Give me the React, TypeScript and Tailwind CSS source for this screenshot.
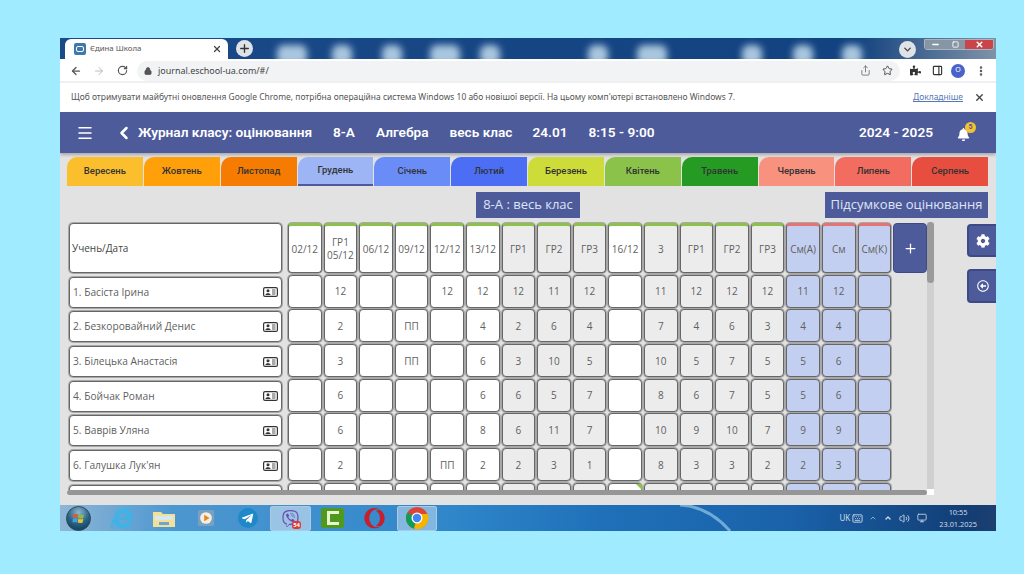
import { ArrowLeft, ArrowRight, RotateCw, Lock, Star, Share, MoreVertical, X, Plus, Menu, ChevronLeft, ChevronDown, Minus, Square, PanelRight, Volume2, ChevronUp, Keyboard, Monitor } from "lucide-react";
import { FaBell, FaCog, FaPuzzlePiece, FaRegArrowAltCircleLeft, FaInternetExplorer, FaTelegramPlane, FaViber, FaOpera } from "react-icons/fa";

const months = [
  { name: "Вересень", bg: "bg-[#fbbf2d]" },
  { name: "Жовтень", bg: "bg-[#ff9f0a]" },
  { name: "Листопад", bg: "bg-[#f57c00]" },
  { name: "Грудень", bg: "bg-[#9db4f5]", active: true },
  { name: "Січень", bg: "bg-[#6a8cf7]" },
  { name: "Лютий", bg: "bg-[#4c6ef5]" },
  { name: "Березень", bg: "bg-[#cddc39]" },
  { name: "Квітень", bg: "bg-[#8bc34a]" },
  { name: "Травень", bg: "bg-[#259b24]" },
  { name: "Червень", bg: "bg-[#f9917f]" },
  { name: "Липень", bg: "bg-[#f36c60]" },
  { name: "Серпень", bg: "bg-[#e84e40]" },
];

const columns = ["02/12", "ГР1 05/12", "06/12", "09/12", "12/12", "13/12", "ГР1", "ГР2", "ГР3", "16/12", "3", "ГР1", "ГР2", "ГР3", "См(А)", "См", "См(К)"];
const whiteCols = [0, 1, 2, 3, 4, 5, 9];

const students = [
  { name: "1. Басіста Ірина", marks: ["", "12", "", "", "12", "12", "12", "11", "12", "", "11", "12", "12", "12", "11", "12", ""] },
  { name: "2. Безкоровайний Денис", marks: ["", "2", "", "ПП", "", "4", "2", "6", "4", "", "7", "4", "6", "3", "4", "4", ""] },
  { name: "3. Білецька Анастасія", marks: ["", "3", "", "ПП", "", "6", "3", "10", "5", "", "10", "5", "7", "5", "5", "6", ""] },
  { name: "4. Бойчак Роман", marks: ["", "6", "", "", "", "6", "6", "5", "7", "", "8", "6", "7", "5", "5", "6", ""] },
  { name: "5. Ваврів Уляна", marks: ["", "6", "", "", "", "8", "6", "11", "7", "", "10", "9", "10", "7", "9", "9", ""] },
  { name: "6. Галушка Лук'ян", marks: ["", "2", "", "", "ПП", "2", "2", "3", "1", "", "8", "3", "3", "2", "2", "3", ""] },
  { name: "", marks: Array(17).fill("") },
];

function cellBg(i: number) {
  if (i >= 14) return "bg-[#c3cff0]";
  return whiteCols.includes(i) ? "bg-white" : "bg-[#ececec]";
}

const blobs = [
  { x: 232, w: 30 }, { x: 282, w: 20 }, { x: 332, w: 20 }, { x: 385, w: 30 }, { x: 430, w: 20 },
  { x: 538, w: 20 }, { x: 592, w: 30 }, { x: 692, w: 20 }, { x: 743, w: 20 }, { x: 792, w: 20 },
];

function Wallpaper() {
  return (
    <svg width="936" height="22" className="absolute left-0 top-0">
      <defs>
        <filter id="soft" x="-50%" y="-50%" width="200%" height="200%"><feGaussianBlur stdDeviation="3.5" /></filter>
        <linearGradient id="sky" x1="0" x2="1" y1="0" y2="0">
          <stop offset="0" stopColor="#1a4a88" />
          <stop offset="0.85" stopColor="#12427f" />
          <stop offset="1" stopColor="#7f93a8" />
        </linearGradient>
      </defs>
      <rect width="936" height="22" fill="url(#sky)" />
      {blobs.map((b) => (
        <rect key={b.x} x={b.x - b.w / 2} y="7" width={b.w} height="20" rx="7" fill="#a9c6df" filter="url(#soft)" />
      ))}
    </svg>
  );
}

function Browser() {
  return (
    <>
      <div className="relative h-[21px] shrink-0 overflow-hidden">
        <Wallpaper />
        <div className="relative flex h-full items-end pl-[5px]">
          <div className="flex h-[20px] w-[163px] items-center rounded-t-[6px] bg-white pl-[9px] pr-[6px]">
            <div className="flex h-[12px] w-[12px] items-center justify-center rounded-[2px] bg-[#3f78ab]">
              <div className="h-[6px] w-[8px] rounded-[2px] border border-white" />
            </div>
            <span className="ml-[4px] text-[7.8px] text-[#555]">Єдина Школа</span>
            <X size={10} strokeWidth={3} className="ml-auto text-[#444]" />
          </div>
          <div className="mb-[2px] ml-[8px] flex h-[17px] w-[17px] items-center justify-center rounded-full bg-[#dfe3e8]">
            <Plus size={13} strokeWidth={2.5} className="text-[#333]" />
          </div>
          <div className="mb-[1px] ml-auto mr-[80px] flex h-[17px] w-[17px] items-center justify-center rounded-full bg-[#dfe3e8]">
            <ChevronDown size={11} strokeWidth={3} className="text-[#444]" />
          </div>
        </div>
        <div className="absolute right-[2px] top-[1px] flex h-[11px] w-[70px] overflow-hidden rounded-b-[3px] border border-[#a9b4bf]">
          <div className="flex w-[20px] items-center justify-center bg-[#8796a5]"><Minus size={9} strokeWidth={4} className="text-white" /></div>
          <div className="flex w-[20px] items-center justify-center bg-[#8796a5]"><Square size={7} strokeWidth={3} className="text-white" /></div>
          <div className="flex flex-1 items-center justify-center bg-[#c8454a]"><X size={9} strokeWidth={4} className="text-white" /></div>
        </div>
      </div>
      <div className="flex h-[22px] shrink-0 items-center bg-white pl-[10px] pr-[6px] pt-[1px] text-[#555]">
        <ArrowLeft size={12} strokeWidth={2.5} />
        <ArrowRight size={12} strokeWidth={2} className="ml-[11px] text-[#bbb]" />
        <RotateCw size={11} strokeWidth={2.5} className="ml-[12px]" />
        <div className="ml-[9px] flex h-[20px] w-[763px] items-center rounded-full bg-[#f1f3f4] pl-[7px] pr-[4px]">
          <Lock size={8} strokeWidth={3} fill="#555" />
          <span className="ml-[6px] text-[8.95px] text-[#444]">journal.eschool-ua.com/#/</span>
          <Share size={11} className="ml-auto text-[#777]" />
          <Star size={11} strokeWidth={2} className="ml-[11px] mr-[3px] text-[#444]" />
        </div>
        <FaPuzzlePiece size={11} className="ml-[10px] text-[#333]" />
        <PanelRight size={11} strokeWidth={2.5} className="ml-[11px] text-[#333]" />
        <div className="ml-[8px] flex h-[14px] w-[14px] items-center justify-center rounded-full bg-[#4a63c8] text-[7px] text-white">O</div>
        <MoreVertical size={12} strokeWidth={3} className="ml-[10px] text-[#555]" />
      </div>
      <div className="flex h-[2px] shrink-0 bg-[#eef0f2]" />
      <div className="flex h-[29px] shrink-0 items-center bg-white pl-[11px] pr-[11px] text-[8.45px] text-[#555]">
        <span>Щоб отримувати майбутні оновлення Google Chrome, потрібна операційна система Windows 10 або новішої версії. На цьому комп'ютері встановлено Windows 7.</span>
        <span className="ml-auto text-[#5577b5] underline">Докладніше</span>
        <X size={11} strokeWidth={3} className="ml-[11px] text-[#444]" />
      </div>
    </>
  );
}

function Header() {
  return (
    <div className="flex h-[41px] shrink-0 items-center bg-[#4e5b9b] pl-[16px] pr-[19px] font-['Roboto',sans-serif] text-[13.65px] font-semibold text-white shadow-[0_2px_3px_rgba(0,0,0,0.25)]">
      <Menu size={18} strokeWidth={2} />
      <ChevronLeft size={20} strokeWidth={3} className="ml-[20px]" />
      <span className="ml-[4px]">Журнал класу: оцінювання</span>
      <span className="ml-[21px]">8-А</span>
      <span className="ml-[21px]">Алгебра</span>
      <span className="ml-[21px]">весь клас</span>
      <span className="ml-[20px]">24.01</span>
      <span className="ml-[21px]">8:15 - 9:00</span>
      <span className="ml-auto">2024 - 2025</span>
      <div className="relative ml-[24px] mr-[7px] mt-[3px]">
        <FaBell size={13} />
        <div className="absolute -right-[6px] -top-[6px] flex h-[11px] w-[11px] items-center justify-center rounded-full bg-[#f2c230] text-[7px] font-bold text-[#4e5b9b]">5</div>
      </div>
    </div>
  );
}

function Tabs() {
  return (
    <div className="mt-[4px] flex shrink-0 gap-[1px] pl-[7px]">
      {months.map((m) => (
        <div key={m.name} className={`flex h-[29px] w-[75.85px] items-center justify-center rounded-tl-[10px] pb-[1px] font-['Roboto',sans-serif] text-[9.5px] font-medium text-[#333] ${m.bg} ${m.active ? "border-b-2 border-[#4e5b9b]" : ""}`}>
          {m.name}
        </div>
      ))}
    </div>
  );
}

function IdCard() {
  return (
    <svg width="15" height="10" viewBox="0 0 15 10">
      <rect x="0.6" y="0.6" width="13.8" height="8.8" rx="1.5" fill="#fff" stroke="#333" strokeWidth="1.2" />
      <circle cx="5" cy="3.7" r="1.5" fill="#333" />
      <path d="M2.4 8 C2.4 5.6 7.6 5.6 7.6 8 Z" fill="#333" />
      <path d="M9 3 H12.5 M9 5 H12.5 M9 7 H12.5" stroke="#555" strokeWidth="1" />
    </svg>
  );
}

function HeadCell({ label, i }: { label: string; i: number }) {
  const top = i >= 14 ? "border-t-[#e57373]" : "border-t-[#8bc34a]";
  return (
    <div className={`flex h-[50px] w-[33.6px] shrink-0 items-center justify-center rounded-[4px] border-[1.5px] border-t-[3px] border-[#666] text-center text-[10px] leading-[13px] shadow-[0_0_0_1px_#a8a8a8] ${top} ${cellBg(i)}`}>
      {label}
    </div>
  );
}

function Journal() {
  return (
    <div className="flex w-[868px] shrink-0 font-['Open_Sans',sans-serif] text-[#5f5f5f]">
      <div className="w-[860px] shrink-0">
        <div className="h-[268px] overflow-hidden pl-[2px]">
          <div className="flex gap-[2px] pt-[1px]">
            <div className="mr-[4px] flex h-[50px] w-[213px] shrink-0 items-center rounded-[4px] border-[1.5px] border-[#666] bg-white pl-[2px] text-[10px] text-[#444] shadow-[0_0_0_1px_#a8a8a8]">Учень/Дата</div>
            {columns.map((c, i) => <HeadCell key={i} label={c} i={i} />)}
            <div className="flex h-[50px] w-[34px] shrink-0 items-center justify-center rounded-[4px] border-[1.5px] border-[#3e4a85] bg-[#4e5b9b] text-white">
              <Plus size={15} strokeWidth={2} />
            </div>
          </div>
          <div className="mt-[1.7px] flex flex-col gap-[1.7px]">
            {students.map((s, r) => (
              <div key={r} className="flex h-[33px] shrink-0 gap-[2px]">
                <div className="mr-[4px] mt-[2px] flex h-[31px] w-[213px] shrink-0 items-center rounded-[4px] border-[1.5px] border-[#666] bg-white pl-[3px] pr-[3px] text-[10.2px] shadow-[0_0_0_1px_#a8a8a8]">
                  <span>{s.name}</span>
                  <span className="ml-auto"><IdCard /></span>
                </div>
                {s.marks.map((m, i) => (
                  <div key={i} className={`relative flex h-[33px] w-[33.6px] shrink-0 items-center justify-center rounded-[4px] border-[1.5px] border-[#666] pt-[1px] text-[10px] shadow-[0_0_0_1px_#a8a8a8] ${cellBg(i)}`}>
                    {m}
                    {r === 6 && i === 9 && <div className="absolute right-[-1px] top-0 h-0 w-0 border-l-[6px] border-t-[6px] border-l-transparent border-t-[#8bc34a]" />}
                  </div>
                ))}
              </div>
            ))}
          </div>
        </div>
        <div className="h-[5px] rounded-full bg-[#969696]" />
      </div>
      <div className="flex h-[273px] w-[7px] shrink-0 flex-col bg-[#d0d0d0]">
        <div className="h-[61px] rounded-full bg-[#9a9a9a]" />
        <div className="mt-auto h-[6px] bg-white" />
      </div>
    </div>
  );
}

function SideButtons() {
  return (
    <div className="ml-auto flex w-[29px] flex-col gap-[12px] pt-[2px]">
      <div className="flex h-[33px] items-center justify-center rounded-l-[4px] border-2 border-r-0 border-[#3e4a85] bg-[#4e5b9b] text-white"><FaCog size={14} /></div>
      <div className="flex h-[34px] items-center justify-center rounded-l-[4px] border-2 border-r-0 border-[#3e4a85] bg-[#4e5b9b] text-white"><FaRegArrowAltCircleLeft size={12} /></div>
    </div>
  );
}

function ChromeLogo() {
  return (
    <svg width="24" height="24" viewBox="0 0 24 24">
      <circle cx="12" cy="12" r="11" fill="#db4437" />
      <path d="M12 12 L2.5 6.5 A11 11 0 0 0 9 22.6 Z" fill="#0f9d58" />
      <path d="M12 12 L9 22.6 A11 11 0 0 0 22.5 8 L12 8 Z" fill="#f4b400" />
      <circle cx="12" cy="12" r="5.5" fill="#fff" />
      <circle cx="12" cy="12" r="4.2" fill="#4285f4" />
    </svg>
  );
}

function StartOrb() {
  return (
    <svg width="25" height="25" viewBox="0 0 25 25" className="ml-[6px]">
      <defs>
        <radialGradient id="orb" cx="0.5" cy="0.25" r="0.8">
          <stop offset="0" stopColor="#8fb7cf" />
          <stop offset="0.55" stopColor="#2a6485" />
          <stop offset="1" stopColor="#123a55" />
        </radialGradient>
      </defs>
      <circle cx="12.5" cy="12.5" r="12" fill="url(#orb)" stroke="#2d4c63" />
      <path d="M7.5 8.5 Q9.5 7.5 12 8.5 L11.5 12 Q9.5 11 7 12 Z" fill="#e2592c" />
      <path d="M12.8 8.7 Q15 9.5 17.8 8.5 L17.3 12 Q15 13 12.3 12.2 Z" fill="#8bbf3e" />
      <path d="M6.9 12.8 Q9.2 11.8 11.4 12.8 L11 16.4 Q9 15.4 6.4 16.4 Z" fill="#3ea0dc" />
      <path d="M12.2 13 Q15 13.8 17.2 12.8 L16.7 16.4 Q14.5 17.4 11.8 16.6 Z" fill="#f0c030" />
    </svg>
  );
}

function Taskbar() {
  return (
    <div className="relative flex h-[26px] shrink-0 items-center overflow-hidden bg-[linear-gradient(90deg,#8fb6d6_0%,#4d97d0_12%,#3b8dcd_30%,#2f86c9_42%,#1f70b8_58%,#1a62aa_78%,#123d74_97%,#1d3f70_100%)] text-white">
      <svg width="120" height="26" viewBox="0 0 120 26" className="absolute left-[620px] top-0">
        <path d="M0 0 C 20 1 36 10 50 26" stroke="#8cc0e6" strokeWidth="3" fill="none" opacity="0.75" />
      </svg>
      <StartOrb />
      <FaInternetExplorer size={22} className="relative ml-[20px] text-[#3fb3e6]" />
      <svg width="24" height="20" viewBox="0 0 24 20" className="relative ml-[19px]">
        <path d="M1 4 h8 l2 2 h12 v13 h-22 z" fill="#f1e09a" />
        <rect x="3" y="8" width="18" height="4" fill="#d9e8f0" />
        <rect x="7" y="14" width="10" height="3" fill="#6fa7cc" />
      </svg>
      <svg width="18" height="20" viewBox="0 0 20 20" className="relative ml-[21px]">
        <rect x="1" y="1" width="18" height="18" rx="2" fill="#7ba0bf" />
        <circle cx="10" cy="10" r="6.5" fill="#f2efe6" />
        <path d="M8 6.5 L14 10 L8 13.5 Z" fill="#e8861e" />
      </svg>
      <div className="relative ml-[23px] flex h-[20px] w-[20px] items-center justify-center rounded-full bg-[#1f88c9]">
        <FaTelegramPlane size={13} className="mr-[1px]" />
      </div>
      <div className="relative ml-[12px] flex h-[25px] w-[41px] items-center justify-center rounded-[2px] border border-[#a9cbe6] bg-[#d6e6f3]/60">
        <FaViber size={17} className="text-[#6f4bb0]" />
        <span className="absolute bottom-[1px] right-[9px] rounded-[3px] bg-[#d93a3a] px-[1px] text-[6px] font-bold leading-[8px]">54</span>
      </div>
      <div className="relative ml-[10px] flex h-[20px] w-[23px] items-center justify-center rounded-[2px] bg-[#4f9a1e]">
        <div className="h-[14px] w-[12px] border-[3px] border-r-0 border-[#e8f5d0]" />
      </div>
      <FaOpera size={21} className="relative ml-[20px] text-[#c5202c]" />
      <div className="relative ml-[12px] flex h-[25px] w-[40px] items-center justify-center rounded-[2px] border border-[#a9cbe6] bg-[#d6e6f3]/50">
        <ChromeLogo />
      </div>
      <div className="relative ml-auto flex items-center text-[#cfd9e6]">
        <span className="text-[8px]">UK</span>
        <Keyboard size={11} className="ml-[2px]" />
        <ChevronUp size={8} className="ml-[6px]" />
        <ChevronUp size={8} strokeWidth={4} className="ml-[7px]" />
        <Volume2 size={11} className="ml-[7px]" />
        <Monitor size={10} className="ml-[7px]" />
        <div className="ml-[12px] mr-[19px] text-center text-[7.4px] leading-[12px]">
          <div>10:55</div>
          <div>23.01.2025</div>
        </div>
      </div>
    </div>
  );
}

export default function App() {
  return (
    <div className="h-[574px] w-[1024px] overflow-hidden bg-[#a0ebff] pl-[60px] pt-[38px] font-['Noto_Sans',sans-serif]">
      <div className="flex h-[493px] w-[936px] flex-col overflow-hidden bg-[#e2e2e2]">
        <Browser />
        <Header />
        <Tabs />
        <div className="flex h-[36px] shrink-0 items-start pt-[6px] font-['Open_Sans',sans-serif] text-[13px] text-[#dfe4f5]">
          <div className="ml-[416px] flex h-[26px] w-[104px] items-center justify-center bg-[#4e5b9b]">8-А : весь клас</div>
          <div className="ml-[245px] flex h-[26px] w-[163px] items-center justify-center bg-[#4e5b9b]">Підсумкове оцінювання</div>
        </div>
        <div className="flex flex-1 pl-[7px]">
          <Journal />
          <SideButtons />
        </div>
        <Taskbar />
      </div>
    </div>
  );
}
